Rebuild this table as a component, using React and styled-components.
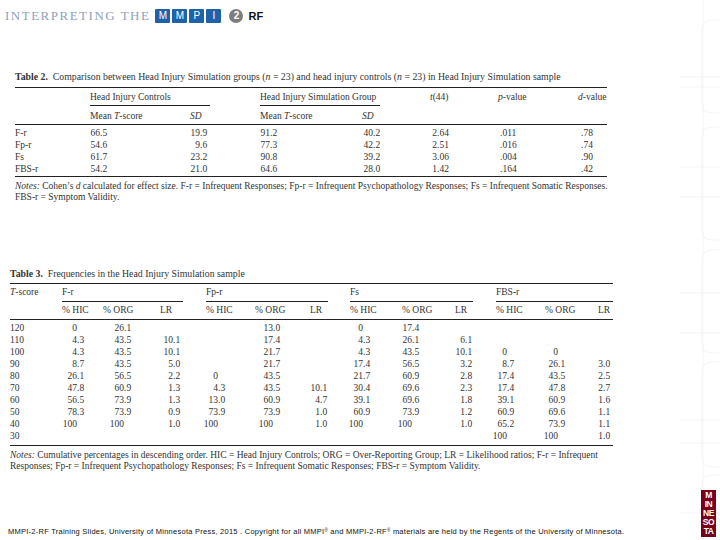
import React from "react";
import styled, { createGlobalStyle } from "styled-components";

const GlobalStyle = createGlobalStyle`
  html, body {
    margin: 0;
    padding: 0;
    background: #fff;
  }
  body {
    width: 720px;
    height: 540px;
    overflow: hidden;
  }
`;

// Table 2 data: label, HIC mean, HIC SD, HISG mean, HISG SD, t, p, d
const table2Rows = [
  ["F-r", "66.5", "19.9", "91.2", "40.2", "2.64", ".011", ".78"],
  ["Fp-r", "54.6", "9.6", "77.3", "42.2", "2.51", ".016", ".74"],
  ["Fs", "61.7", "23.2", "90.8", "39.2", "3.06", ".004", ".90"],
  ["FBS-r", "54.2", "21.0", "64.6", "28.0", "1.42", ".164", ".42"],
];
const table2Dp = [10, 10, 10, 11, 7, 2, 3];

// Table 3 data: T-score then HIC / ORG / LR for F-r, Fp-r, Fs, FBS-r
const table3Rows = [
  ["120", "0", "26.1", "", "", "13.0", "", "0", "17.4", "", "", "", ""],
  ["110", "4.3", "43.5", "10.1", "", "17.4", "", "4.3", "26.1", "6.1", "", "", ""],
  ["100", "4.3", "43.5", "10.1", "", "21.7", "", "4.3", "43.5", "10.1", "0", "0", ""],
  ["90", "8.7", "43.5", "5.0", "", "21.7", "", "17.4", "56.5", "3.2", "8.7", "26.1", "3.0"],
  ["80", "26.1", "56.5", "2.2", "0", "43.5", "", "21.7", "60.9", "2.8", "17.4", "43.5", "2.5"],
  ["70", "47.8", "60.9", "1.3", "4.3", "43.5", "10.1", "30.4", "69.6", "2.3", "17.4", "47.8", "2.7"],
  ["60", "56.5", "73.9", "1.3", "13.0", "60.9", "4.7", "39.1", "69.6", "1.8", "39.1", "60.9", "1.6"],
  ["50", "78.3", "73.9", "0.9", "73.9", "73.9", "1.0", "60.9", "73.9", "1.2", "60.9", "69.6", "1.1"],
  ["40", "100", "100", "1.0", "100", "100", "1.0", "100", "100", "1.0", "65.2", "73.9", "1.1"],
  ["30", "", "", "", "", "", "", "", "", "", "100", "100", "1.0"],
];
const table3Dp = [15, 21, 13, 12, 18, 10, 13, 10, 10, 11, 13, 5];
const table3Groups = [
  { label: "F-r", gap: 23 },
  { label: "Fp-r", gap: 22 },
  { label: "Fs", gap: 23 },
  { label: "FBS-r", gap: 0 },
];

/**
 * Number cell, aligned on its decimal point.
 */
function Num({ value, dp }) {
  if (!value) return <Cell />;
  const [whole, frac] = value.split(".");
  return (
    <Cell>
      <IntPart $w={dp}>{whole}</IntPart>
      {frac !== undefined && <span>.{frac}</span>}
    </Cell>
  );
}

function App() {
  return (
    <>
      <GlobalStyle />
      <Slide>
        <Deco width="40" height="540" viewBox="0 0 40 540">
          <g fill="none" stroke="#eceff4" strokeWidth="0.7">
            <line x1="23" y1="0" x2="23" y2="540" />
            <path d="M40 20 H32 Q22 20 22 30 V103 Q22 113 32 113 H40" />
            <path d="M40 127 H32 Q22 127 22 137 V230 Q22 240 32 240 H40" />
            <path d="M40 250 H32 Q22 250 22 260 V343 Q22 353 32 353 H40" />
            <path d="M40 362 H32 Q22 362 22 372 V457 Q22 467 32 467 H40" />
            <path d="M40 475 H32 Q22 475 22 485 V540" />
            <line x1="0" y1="77" x2="40" y2="77" />
            <line x1="0" y1="87" x2="40" y2="87" />
            <line x1="0" y1="167" x2="40" y2="167" />
            <line x1="0" y1="197" x2="40" y2="197" />
            <line x1="0" y1="293" x2="40" y2="293" />
            <line x1="0" y1="333" x2="40" y2="333" />
            <line x1="0" y1="420" x2="40" y2="420" />
            <line x1="0" y1="443" x2="40" y2="443" />
            <line x1="0" y1="513" x2="40" y2="513" />
          </g>
        </Deco>

        <Header>
          <Brand>INTERPRETING THE</Brand>
          <Tiles>
            {["M", "M", "P", "I"].map((ch, i) => (
              <Tile key={i}>{ch}</Tile>
            ))}
          </Tiles>
          <Circle>2</Circle>
          <RF>RF</RF>
        </Header>

        <TableBlock $left={15} $width={592} $top={48}>
          <Caption>
            <b>Table 2.</b>&nbsp; Comparison between Head Injury Simulation
            groups (<i>n</i> = 23) and head injury controls (<i>n</i> = 23) in
            Head Injury Simulation sample
          </Caption>
          <Table2Head>
            <Cell />
            <GroupHead $span={2} $gap={50}>Head Injury Controls</GroupHead>
            <GroupHead $span={2} $gap={50}>Head Injury Simulation Group</GroupHead>
            <TopCell>
              <i>t</i>(44)
            </TopCell>
            <TopCell>
              <i>p</i>-value
            </TopCell>
            <TopCell>
              <i>d</i>-value
            </TopCell>
            <Cell />
            <SubHead>
              Mean <i>T</i>-score
            </SubHead>
            <SubHead>
              <i>SD</i>
            </SubHead>
            <SubHead>
              Mean <i>T</i>-score
            </SubHead>
            <SubHead>
              <i>SD</i>
            </SubHead>
            <SubHead />
            <SubHead />
            <SubHead />
          </Table2Head>
          <Table2Body>
            {table2Rows.map((row) => (
              <React.Fragment key={row[0]}>
                <Cell>{row[0]}</Cell>
                {row.slice(1).map((v, i) => (
                  <Num key={i} value={v} dp={table2Dp[i]} />
                ))}
              </React.Fragment>
            ))}
          </Table2Body>
          <Notes>
            <Line>
              <i>Notes:</i> Cohen’s <i>d</i> calculated for effect size. F-r =
              Infrequent Responses; Fp-r = Infrequent Psychopathology Responses;
              Fs = Infrequent Somatic Responses.
            </Line>
            <Line>FBS-r = Symptom Validity.</Line>
          </Notes>
        </TableBlock>

        <TableBlock $left={10} $width={603} $top={65}>
          <Caption>
            <b>Table 3.</b>&nbsp; Frequencies in the Head Injury Simulation
            sample
          </Caption>
          <Table3Head>
            <Cell3>
              <i>T</i>-score
            </Cell3>
            {table3Groups.map((g) => (
              <GroupHead3 key={g.label} $gap={g.gap}>
                {g.label}
              </GroupHead3>
            ))}
            <SubHead3 />
            {table3Groups.map((g) => (
              <React.Fragment key={g.label}>
                <SubHead3>% HIC</SubHead3>
                <SubHead3>% ORG</SubHead3>
                <SubHead3>LR</SubHead3>
              </React.Fragment>
            ))}
          </Table3Head>
          <Table3Body>
            {table3Rows.map((row) => (
              <React.Fragment key={row[0]}>
                <Cell>{row[0]}</Cell>
                {row.slice(1).map((v, i) => (
                  <Num key={i} value={v} dp={table3Dp[i]} />
                ))}
              </React.Fragment>
            ))}
          </Table3Body>
          <Notes>
            <Line>
              <i>Notes:</i> Cumulative percentages in descending order. HIC =
              Head Injury Controls; ORG = Over-Reporting Group; LR = Likelihood
              ratios; F-r = Infrequent
            </Line>
            <Line>
              Responses; Fp-r = Infrequent Psychopathology Responses; Fs =
              Infrequent Somatic Responses; FBS-r = Symptom Validity.
            </Line>
          </Notes>
        </TableBlock>

        <Spacer />

        <Footer>
          <FooterText>
            MMPI-2-RF Training Slides, University of Minnesota Press, 2015 .
            Copyright for all MMPI<sup>®</sup> and MMPI-2-RF<sup>®</sup>{" "}
            materials are held by the Regents of the University of Minnesota.
          </FooterText>
          <Logo>
            <span>M</span>
            <span>IN</span>
            <span>NE</span>
            <span>SO</span>
            <span>TA</span>
          </Logo>
        </Footer>
      </Slide>
    </>
  );
}

const Slide = styled.div`
  position: relative;
  width: 720px;
  height: 540px;
  background: #fff;
  display: flex;
  flex-direction: column;
  overflow: hidden;
  font-family: "Liberation Serif", "Times New Roman", serif;
  color: #333;
`;

const Deco = styled.svg`
  position: absolute;
  top: 0;
  right: 0;
  z-index: 0;
`;

const Header = styled.div`
  display: flex;
  align-items: center;
  height: 14px;
  padding: 9px 0 0 5px;
`;

const Brand = styled.div`
  font-family: "Liberation Serif", serif;
  font-size: 13px;
  letter-spacing: 1.5px;
  color: #8ea2bd;
  white-space: nowrap;
`;

const Tiles = styled.div`
  display: flex;
  gap: 2px;
  margin-left: 5px;
`;

const Tile = styled.div`
  width: 15px;
  height: 14px;
  background: #1f62aa;
  border-radius: 1px;
  color: #fff;
  font: 10px/14px "Liberation Sans", Arial, sans-serif;
  text-align: center;
`;

const Circle = styled.div`
  width: 14px;
  height: 14px;
  margin-left: 8px;
  border-radius: 50%;
  background: #7d7d7d;
  color: #fff;
  font: 700 10px/14px "Liberation Sans", Arial, sans-serif;
  text-align: center;
`;

const RF = styled.div`
  margin-left: 5px;
  font: 700 11px/14px "Liberation Sans", Arial, sans-serif;
  color: #111;
`;

const TableBlock = styled.div`
  position: relative;
  z-index: 1;
  margin-left: ${(p) => p.$left}px;
  margin-top: ${(p) => p.$top}px;
  width: ${(p) => p.$width}px;
  font-size: 9.5px;
  line-height: 12px;
`;

const Caption = styled.div`
  font-size: 9.8px;
  white-space: nowrap;
  margin-bottom: 3.5px;
  b {
    font-weight: 700;
  }
`;

const Cell = styled.div`
  white-space: nowrap;
  line-height: 12px;
  height: 12px;
`;

const IntPart = styled.span`
  display: inline-flex;
  justify-content: flex-end;
  width: ${(p) => p.$w}px;
`;

const Table2Head = styled.div`
  display: grid;
  grid-template-columns: 75px 100px 70px 102px 68px 68px 80px 29px;
  border-top: 1.5px solid #222;
  border-bottom: 1px solid #222;
`;

const GroupHead = styled.div`
  grid-column: span ${(p) => p.$span};
  margin-right: ${(p) => p.$gap}px;
  padding: 3px 0 2.5px;
  border-bottom: 1.3px solid #222;
  white-space: nowrap;
`;

const TopCell = styled.div`
  padding-top: 3px;
  white-space: nowrap;
`;

const SubHead = styled.div`
  padding: 3.5px 0 2px;
  white-space: nowrap;
`;

const Table2Body = styled.div`
  display: grid;
  grid-template-columns: 75px 100px 70px 102px 68px 68px 80px 29px;
  padding: 2px 0 1px;
  border-bottom: 1.5px solid #222;
`;

const Notes = styled.div`
  margin-top: 4px;
  line-height: 11px;
`;

const Line = styled.div`
  white-space: nowrap;
`;

const table3Cols = "52px 41px 57px 46px 49px 55px 40px 52px 53px 41px 49px 53px 15px";

const Table3Head = styled.div`
  display: grid;
  grid-template-columns: ${table3Cols};
  border-top: 1.5px solid #222;
  border-bottom: 1px solid #222;
`;

const Cell3 = styled.div`
  padding-top: 1.5px;
  white-space: nowrap;
`;

const GroupHead3 = styled.div`
  grid-column: span 3;
  margin-right: ${(p) => p.$gap}px;
  padding: 1.5px 0 3px;
  border-bottom: 1.5px solid #222;
  white-space: nowrap;
`;

const SubHead3 = styled.div`
  padding: 2.5px 0 3px;
  white-space: nowrap;
`;

const Table3Body = styled.div`
  display: grid;
  grid-template-columns: ${table3Cols};
  padding: 2px 0 2.5px;
  border-bottom: 1.5px solid #222;
`;

const Spacer = styled.div`
  flex: 1;
`;

const Footer = styled.div`
  position: relative;
  z-index: 1;
  display: flex;
  align-items: flex-end;
  justify-content: space-between;
  padding: 0 4px 3px 8px;
`;

const FooterText = styled.div`
  margin-bottom: 1.5px;
  font: 7.5px/9px "Liberation Sans", Arial, sans-serif;
  letter-spacing: 0.25px;
  color: #111;
  white-space: nowrap;
  sup {
    font-size: 4.5px;
    line-height: 0;
    vertical-align: 2.5px;
  }
`;

const Logo = styled.div`
  width: 15px;
  height: 47px;
  background: #7a0019;
  color: #fff;
  display: flex;
  flex-direction: column;
  align-items: center;
  justify-content: center;
  font: 700 8.5px/9px "Liberation Sans", Arial, sans-serif;
  letter-spacing: -0.5px;
`;

export default App;
